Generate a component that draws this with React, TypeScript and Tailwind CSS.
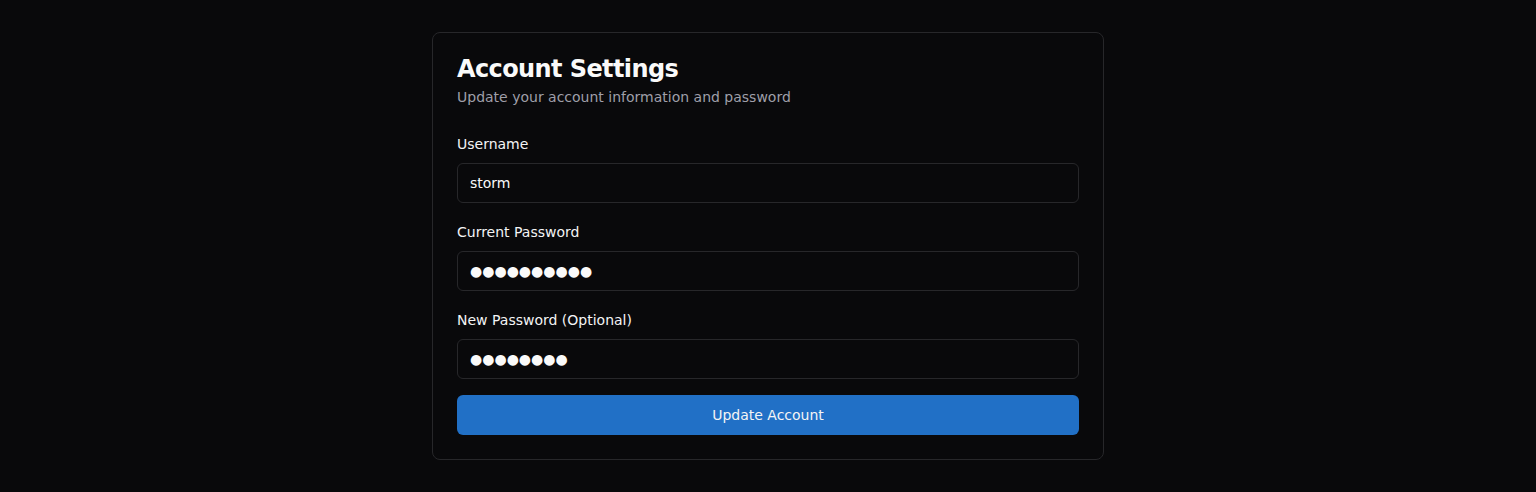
import { useState } from "react";

function Field({
  label,
  value,
  onChange,
}: {
  label: string;
  value: string;
  onChange: (v: string) => void;
}) {
  return (
    <div className="flex flex-col">
      <label className="mb-[9px] text-sm leading-5 font-medium text-zinc-100">{label}</label>
      <input
        type="text"
        value={value}
        onChange={(e) => onChange(e.target.value)}
        className="h-10 w-full rounded-md border border-zinc-800 bg-transparent px-3 text-sm text-zinc-50 outline-none"
      />
    </div>
  );
}

export default function App() {
  const [username, setUsername] = useState("storm");
  const [current, setCurrent] = useState("●●●●●●●●●●");
  const [next, setNext] = useState("●●●●●●●●");

  return (
    <div className="min-h-screen w-full bg-[#09090b] pt-8 font-['DejaVu_Sans',sans-serif]">
      <div className="mx-auto w-[672px] rounded-lg border border-zinc-800 bg-[#09090b] p-6">
        <div className="mb-[27px]">
          <h1 className="text-2xl leading-none font-bold tracking-tight text-zinc-50">
            Account Settings
          </h1>
          <p className="mt-1.5 text-sm leading-5 text-zinc-400">
            Update your account information and password
          </p>
        </div>
        <form className="flex flex-col gap-[19px]" onSubmit={(e) => e.preventDefault()}>
          <Field label="Username" value={username} onChange={setUsername} />
          <Field label="Current Password" value={current} onChange={setCurrent} />
          <Field label="New Password (Optional)" value={next} onChange={setNext} />
        </form>
        <button
          type="button"
          className="mt-4 h-10 w-full rounded-md bg-[#2170c6] text-sm text-zinc-100"
        >
          Update Account
        </button>
      </div>
    </div>
  );
}
